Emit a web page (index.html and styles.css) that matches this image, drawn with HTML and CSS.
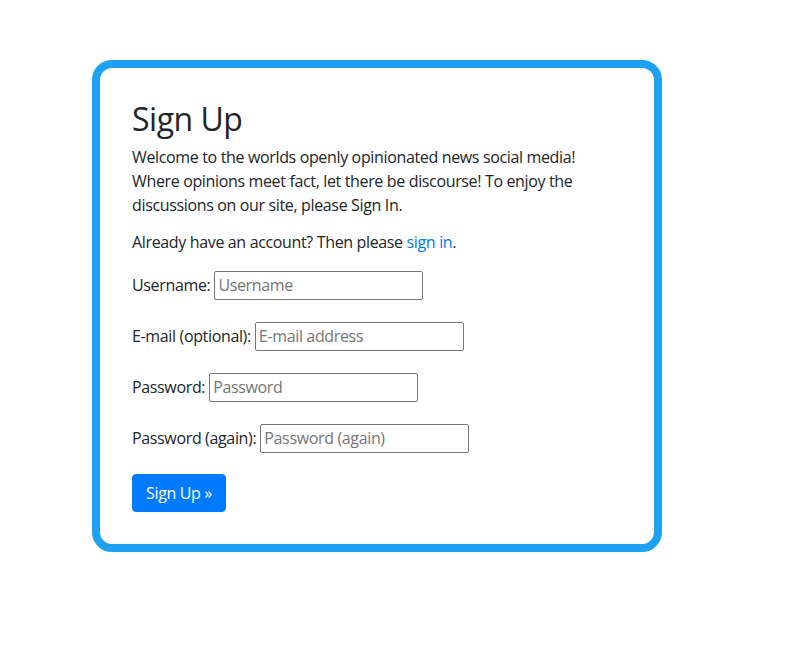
FILE: index.html
```html
<!DOCTYPE html>
<html lang="en">
<head>
<meta charset="utf-8">
<title>Sign Up</title>
<link rel="stylesheet" href="styles.css">
</head>
<body>
<div class="page">
  <div class="card">
    <h2 class="title">Sign Up</h2>
    <p class="intro">Welcome to the worlds openly opinionated news social media! Where opinions meet fact, let there be discourse! To enjoy the discussions on our site, please Sign In.</p>
    <p class="already">Already have an account? Then please <a href="#" class="link">sign in</a>.</p>
    <form class="form">
      <div class="row"><label class="label" for="u">Username:</label><input class="field" id="u" type="text" placeholder="Username"></div>
      <div class="row"><label class="label" for="e">E-mail (optional):</label><input class="field" id="e" type="text" placeholder="E-mail address"></div>
      <div class="row"><label class="label" for="p1">Password:</label><input class="field" id="p1" type="text" placeholder="Password"></div>
      <div class="row"><label class="label" for="p2">Password (again):</label><input class="field" id="p2" type="text" placeholder="Password (again)"></div>
      <button class="btn" type="button">Sign Up &raquo;</button>
    </form>
  </div>
</div>
</body>
</html>
```
FILE: styles.css
```css
* { box-sizing: border-box; }
html, body { margin: 0; background: #fff; }
body {
  font-family: "Open Sans", "Noto Sans", sans-serif;
  font-size: 16px;
  line-height: 24px;
  color: #212529;
  letter-spacing: -0.35px;
}
.page { padding: 60px 0 0 92px; }
.card {
  width: 570px;
  border: 8px solid #1da1f2;
  border-radius: 20px;
  padding: 32px;
}
.title {
  margin: 0 0 8px;
  font-size: 32px;
  line-height: 37px;
  font-weight: 400;
  letter-spacing: -0.5px;
}
.intro { margin: 0 0 13px; }
.already { margin: 0 0 14px; }
.link { color: #007bff; text-decoration: none; }
.form { margin: 0; }
.row {
  display: flex;
  align-items: center;
  height: 34px;
  margin-bottom: 17px;
}
.label { margin-right: 4px; }
.field {
  width: 209px;
  height: 29px;
  border: 1px solid #767676;
  border-radius: 2px;
  padding: 0 3px;
  font: inherit;
  letter-spacing: inherit;
  color: #212529;
}
.field::placeholder { color: #757575; }
.btn {
  display: block;
  width: 94px;
  height: 38px;
  margin-top: 19px;
  padding: 0;
  border: 1px solid #007bff;
  border-radius: 4px;
  background: #007bff;
  color: #fff;
  font: inherit;
  letter-spacing: inherit;
  text-align: center;
}
```
